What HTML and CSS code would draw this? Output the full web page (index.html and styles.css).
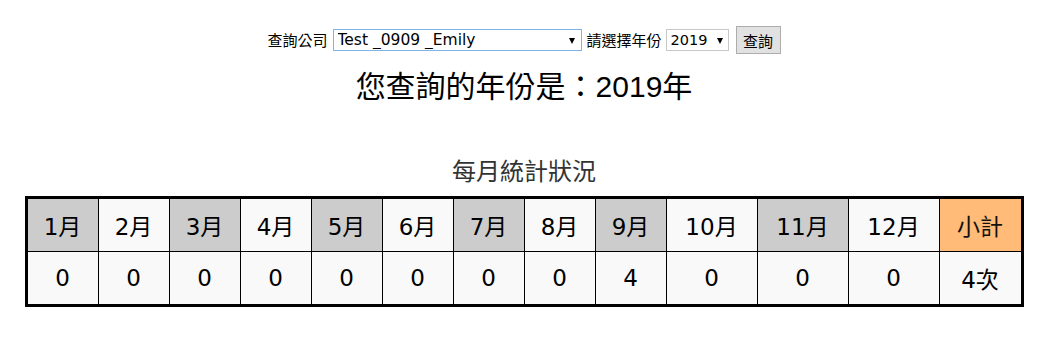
FILE: index.html
```html
<!DOCTYPE html>
<html lang="zh-Hant">
<head>
<meta charset="utf-8">
<title>每月統計狀況</title>
<link rel="stylesheet" href="styles.css">
</head>
<body>
<div class="page">
  <form class="query">
    <label class="lbl" for="company">查詢公司</label>
    <span class="sel-wrap sel-company">
      <select id="company" class="sel">
        <option>Test _0909 _Emily</option>
      </select>
    </span>
    <label class="lbl" for="year">請選擇年份</label>
    <span class="sel-wrap sel-year">
      <select id="year" class="sel">
        <option>2019</option>
      </select>
    </span>
    <button type="button" class="btn">查詢</button>
  </form>
  <h1 class="title">您查詢的年份是：2019年</h1>
  <h2 class="caption">每月統計狀況</h2>
  <table class="stats">
    <thead>
      <tr>
        <th class="c1 odd">1月</th>
        <th class="c1">2月</th>
        <th class="c1 odd">3月</th>
        <th class="c1">4月</th>
        <th class="c1 odd">5月</th>
        <th class="c1">6月</th>
        <th class="c1 odd">7月</th>
        <th class="c1">8月</th>
        <th class="c1 odd">9月</th>
        <th class="c2">10月</th>
        <th class="c2 odd">11月</th>
        <th class="c2">12月</th>
        <th class="sum">小計</th>
      </tr>
    </thead>
    <tbody>
      <tr>
        <td>0</td><td>0</td><td>0</td><td>0</td><td>0</td><td>0</td>
        <td>0</td><td>0</td><td>4</td><td>0</td><td>0</td><td>0</td>
        <td>4次</td>
      </tr>
    </tbody>
  </table>
</div>
</body>
</html>
```

FILE: styles.css
```css
html, body {
  margin: 0;
  padding: 0;
  background: #ffffff;
}

body {
  font-family: "DejaVu Sans", "Noto Sans CJK TC", sans-serif;
  color: #000;
}

.page {
  width: 1032px;
  margin-left: 8px;
  padding-top: 26px;
  display: flex;
  flex-direction: column;
  align-items: center;
}

.query {
  display: flex;
  align-items: center;
  gap: 5px;
  height: 28px;
  margin: 0;
}

.lbl {
  font-family: "Noto Sans CJK TC", sans-serif;
  font-size: 15px;
  line-height: 20px;
}

.sel-wrap {
  position: relative;
  display: inline-block;
}

.sel-wrap::after {
  content: "";
  position: absolute;
  top: 9px;
  width: 0;
  height: 0;
  border-left: 3.5px solid transparent;
  border-right: 3.5px solid transparent;
  border-top: 6px solid #000;
  pointer-events: none;
}

.sel {
  -webkit-appearance: none;
  appearance: none;
  margin: 0;
  height: 22px;
  padding: 0 0 0 4px;
  font-family: "DejaVu Sans", sans-serif;
  color: #000;
  background: #fff;
  border-radius: 0;
  outline: none;
  display: block;
}

.sel-company .sel {
  width: 249px;
  font-size: 15.5px;
  border: 1px solid #7eb4ea;
}

.sel-company::after {
  right: 7px;
}

.sel-year {
  margin-left: -1px;
}

.sel-year .sel {
  width: 63px;
  font-size: 14.5px;
  border: 1px solid #c8c8c8;
}

.sel-year::after {
  right: 6px;
}

.btn {
  margin: 0 0 0 2px;
  width: 45px;
  height: 28px;
  padding: 0;
  font-family: "Noto Sans CJK TC", sans-serif;
  font-size: 15px;
  color: #000;
  background: #e1e1e1;
  border: 1px solid #adadad;
  border-radius: 0;
}

.title {
  margin: 15px 0 0;
  font-family: "Liberation Sans", "Noto Sans CJK TC", sans-serif;
  font-weight: normal;
  font-size: 30px;
  line-height: 36px;
}

.caption {
  margin: 50px 0 0;
  font-family: "Noto Sans CJK TC", sans-serif;
  font-weight: normal;
  font-size: 24px;
  line-height: 30px;
  color: #333;
}

.stats {
  margin-top: 11px;
  width: 999px;
  border-collapse: collapse;
  table-layout: fixed;
  border: 3px solid #000;
}

.stats th,
.stats td {
  border: 1px solid #000;
  text-align: center;
  font-weight: normal;
  font-size: 23px;
  height: 52px;
  padding: 0;
  background: #f9f9f9;
}

.stats th.c1 { width: 70px; }
.stats th.c2 { width: 90px; }
.stats th.odd { background: #cccccc; }
.stats th.sum {
  background: #ffbb77;
  color: #111;
}
```
